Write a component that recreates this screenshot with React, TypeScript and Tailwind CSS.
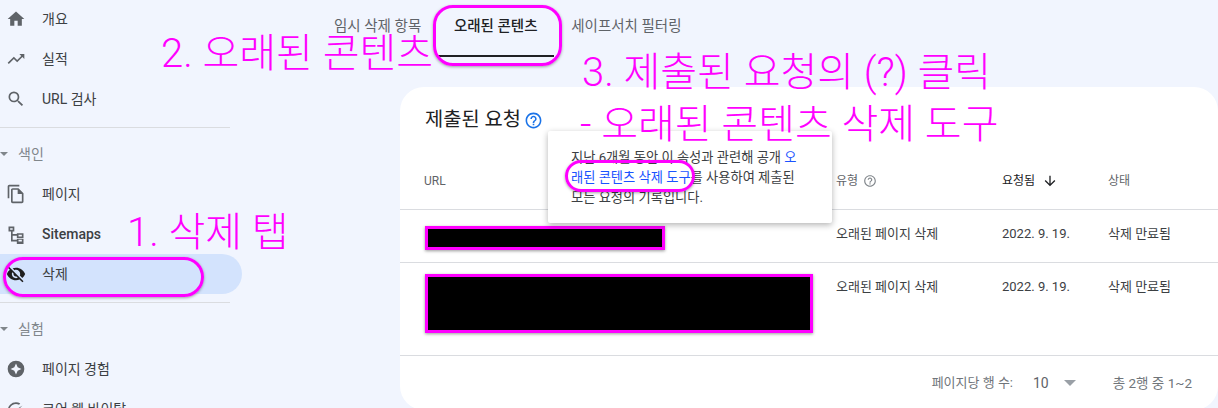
const font = "font-['Roboto','Noto_Sans_CJK_KR',sans-serif]";

function NavItem({ icon, label, active, medium }: { icon: React.ReactNode; label: string; active?: boolean; medium?: boolean }) {
  return (
    <div className={`flex h-10 w-[242px] items-center rounded-r-[20px] ${active ? "bg-[#d3e3fd]" : ""}`}>
      <div className="flex w-[31px] shrink-0 justify-center text-[#5f6368]">{icon}</div>
      <span className={`ml-[11px] text-[14px] text-[#3c4043] ${medium ? "font-medium" : "font-normal"}`}>{label}</span>
    </div>
  );
}

function Section({ label }: { label: string }) {
  return (
    <div className="flex h-10 items-center">
      <svg width="10" height="6" viewBox="0 0 10 6" className="mr-[8px] text-[#80868b]">
        <path d="M0 1h8L4 5z" fill="currentColor" />
      </svg>
      <span className="text-[14px] text-[#80868b]">{label}</span>
    </div>
  );
}

const Icon = ({ d, className }: { d: string; className?: string }) => (
  <svg width="20" height="20" viewBox="0 0 24 24" fill="currentColor" className={className}>
    <path d={d} />
  </svg>
);

function Row({ h, barH, barW, barTop }: { h: string; barH: string; barW: string; barTop: string }) {
  return (
    <div className={`flex border-b border-[#dadce0] ${h}`}>
      <div className={`w-[436px] shrink-0 pl-[25px] ${barTop}`}>
        <div className={`border-[3px] border-[#ff00ff] bg-black shadow-[0_1px_3px_rgba(0,0,0,0.4)] ${barH} ${barW}`} />
      </div>
      <div className="w-[166px] shrink-0 pt-[14px] text-[13px] text-[#3c4043]">오래된 페이지 삭제</div>
      <div className="w-[106px] shrink-0 pt-[14px] text-[13px] text-[#3c4043]">2022. 9. 19.</div>
      <div className="pt-[14px] text-[13px] text-[#3c4043]">삭제 만료됨</div>
    </div>
  );
}

const Note = ({ className, children }: { className: string; children: string }) => (
  <div className={`absolute whitespace-nowrap text-[40px] font-light leading-none text-[#ff00ff] ${className}`}>{children}</div>
);

const Ring = ({ className }: { className: string }) => (
  <div className={`absolute border-[3px] border-[#ff00ff] shadow-[0_1px_3px_rgba(0,0,0,0.35)] ${className}`} />
);

export default function App() {
  return (
    <div className={`relative flex h-[408px] w-[1218px] overflow-hidden bg-[#f1f5fe] ${font}`}>
      <aside className="w-[242px] shrink-0">
        <div className="mt-[-1px]">
          <NavItem label="개요" icon={<Icon d="M10 20v-6h4v6h5v-8h3L12 3 2 12h3v8z" />} />
          <NavItem label="실적" icon={<Icon d="M16 6l2.29 2.29-4.88 4.88-4-4L2 16.59 3.41 18l6-6 4 4 6.3-6.29L22 12V6z" />} />
          <NavItem label="URL 검사" icon={<Icon d="M15.5 14h-.79l-.28-.27A6.47 6.47 0 0016 9.5 6.5 6.5 0 109.5 16c1.61 0 3.09-.59 4.23-1.57l.27.28v.79l5 4.99L20.49 19l-4.99-5zm-6 0C7.01 14 5 11.99 5 9.5S7.01 5 9.5 5 14 7.01 14 9.5 11.99 14 9.5 14z" />} />
        </div>
        <div className="mt-[8px] w-[230px] border-t border-[#dadce0]" />
        <div className="mt-[6px]">
          <Section label="색인" />
          <NavItem label="페이지" icon={<Icon d="M16 1H4c-1.1 0-2 .9-2 2v14h2V3h12V1zm-1 4H8c-1.1 0-2 .9-2 2v14c0 1.1.9 2 2 2h11c1.1 0 2-.9 2-2V11l-6-6zM8 21V7h6v5h5v9H8z" />} />
          <NavItem medium label="Sitemaps" icon={<Icon d="M3 3h7v6H8v3h5v-1h8v6h-8v-3H8v5h5v-1h8v6h-8v-3H6V9H3V3zm2 2v2h3V5H5zm10 8v2h4v-2h-4zm0 7v1h4v-2h-4v1z" />} />
          <NavItem active label="삭제" icon={<Icon className="text-[#1f1f1f]" d="M12 7c2.76 0 5 2.24 5 5 0 .65-.13 1.26-.36 1.83l2.92 2.92c1.51-1.26 2.7-2.89 3.43-4.75-1.73-4.39-6-7.5-11-7.5-1.4 0-2.74.25-3.98.7l2.16 2.16C10.74 7.13 11.35 7 12 7zM2 4.27l2.28 2.28.46.46A11.8 11.8 0 001 12c1.73 4.39 6 7.5 11 7.5 1.55 0 3.03-.3 4.38-.84l.42.42L19.73 22 21 20.73 3.27 3 2 4.27zM7.53 9.8l1.55 1.55c-.05.21-.08.43-.08.65 0 1.66 1.34 3 3 3 .22 0 .44-.03.65-.08l1.55 1.55c-.67.33-1.41.53-2.2.53-2.76 0-5-2.24-5-5 0-.79.2-1.53.53-2.2z" />} />
        </div>
        <div className="mt-[8px] w-[230px] border-t border-[#dadce0]" />
        <div className="mt-[6px]">
          <Section label="실험" />
          <NavItem label="페이지 경험" icon={<Icon d="M12 2a10 10 0 100 20 10 10 0 000-20zm0 3.500l2 4.500 4.500 2-4.500 2-2 4.500-2-4.500-4.500-2 4.500-2z" />} />
          <NavItem label="코어 웹 바이탈" icon={<Icon d="M12 4a10 10 0 00-10 10c0 2.2.7 4.200 1.900 5.800l1.600-1.200A8 8 0 0112 6c1.300 0 2.500.3 3.600.9l1.500-1.500A10 10 0 0012 4zm7.800 3.800l-6.300 6.300a2 2 0 11-1.400-1.400z" />} />
        </div>
      </aside>

      <main className="min-w-0 flex-1">
        <nav className="flex h-[87px] items-start pl-[92px] pt-[16px] text-[14.5px]">
          <span className="pr-[16px] text-[#5f6368]">임시 삭제 항목</span>
          <div className="flex w-[117px] flex-col items-center">
            <span className="font-medium text-[#202124]">오래된 콘텐츠</span>
            <div className="mt-[17px] h-[2px] w-full bg-[#202124]" />
          </div>
          <span className="pl-[17px] text-[#5f6368]">세이프서치 필터링</span>
        </nav>
        <section className="ml-[158px] h-[323px] rounded-[24px] bg-white">
          <div className="flex h-[66px] items-center gap-[3px] pl-[25px]">
            <h2 className="text-[19.8px] text-[#202124]">제출된 요청</h2>
            <svg width="19" height="19" viewBox="0 0 24 24" fill="#1a73e8">
              <path d="M11 18h2v-2h-2v2zm1-16C6.480 2 2 6.480 2 12s4.480 10 10 10 10-4.480 10-10S17.520 2 12 2zm0 18c-4.410 0-8-3.590-8-8s3.590-8 8-8 8 3.590 8 8-3.590 8-8 8zm0-14c-2.210 0-4 1.790-4 4h2c0-1.100.9-2 2-2s2 .9 2 2c0 2-3 1.750-3 5h2c0-2.250 3-2.500 3-5 0-2.210-1.790-4-4-4z" />
            </svg>
          </div>
          <div className="flex h-[57px] items-center border-b border-[#dadce0] text-[12px] text-[#5f6368]">
            <div className="w-[436px] shrink-0 pl-[24px]">URL</div>
            <div className="flex w-[166px] shrink-0 items-center gap-[5px]">
              유형
              <svg width="14" height="14" viewBox="0 0 24 24" fill="#80868b">
                <path d="M11 18h2v-2h-2v2zm1-16C6.480 2 2 6.480 2 12s4.480 10 10 10 10-4.480 10-10S17.520 2 12 2zm0 18c-4.410 0-8-3.590-8-8s3.590-8 8-8 8 3.590 8 8-3.590 8-8 8zm0-14c-2.210 0-4 1.790-4 4h2c0-1.100.9-2 2-2s2 .9 2 2c0 2-3 1.750-3 5h2c0-2.250 3-2.500 3-5 0-2.210-1.790-4-4-4z" />
              </svg>
            </div>
            <div className="flex w-[106px] shrink-0 items-center gap-[7px] text-[#202124]">
              요청됨
              <svg width="16" height="16" viewBox="0 0 24 24" fill="#202124">
                <path d="M20 12l-1.410-1.410L13 16.170V4h-2v12.170l-5.580-5.590L4 12l8 8 8-8z" />
              </svg>
            </div>
            <div>상태</div>
          </div>
          <Row h="h-[53px]" barH="h-[24px]" barW="w-[240px]" barTop="pt-[16px]" />
          <Row h="h-[93px]" barH="h-[59px]" barW="w-[388px]" barTop="pt-[11px]" />
          <div className="flex h-[54px] items-center justify-end pr-[26px] text-[13px] text-[#70757a]">
            <span>페이지당 행 수:</span>
            <span className="ml-[20px] text-[14px] text-[#5f6368]">10</span>
            <svg width="12" height="6" viewBox="0 0 12 6" className="ml-[15px]">
              <path d="M0 0h12L6 6z" fill="#9aa0a6" />
            </svg>
            <span className="ml-[37px] text-[13.5px]">총 2행 중 1~2</span>
          </div>
        </section>
      </main>

      {/* 도움말 팝업 */}
      <div className="absolute left-[548px] top-[131px] h-[92px] w-[284px] rounded-[2px] bg-white pl-[23px] pr-[27px] pt-[17px] text-[13.25px] leading-[20px] text-[#3c4043] shadow-[0_2px_6px_rgba(0,0,0,0.3)]">
        지난 6개월 동안 이 속성과 관련해 공개 <span className="text-[#1a53ff]">오래된 콘텐츠 삭제 도구</span>를 사용하여 제출된 모든 요청의 기록입니다.
      </div>

      {/* 주석 */}
      <Note className="left-[161px] top-[34px]">2. 오래된 콘텐츠</Note>
      <Note className="left-[582px] top-[53px]">3. 제출된 요청의 (?) 클릭</Note>
      <Note className="left-[580px] top-[105px]">- 오래된 콘텐츠 삭제 도구</Note>
      <Note className="left-[127px] top-[213px]">1. 삭제 탭</Note>
      <Ring className="left-[433px] top-[5px] h-[61px] w-[129px] rounded-[20px]" />
      <Ring className="left-[3px] top-[257px] h-[40px] w-[201px] rounded-[20px]" />
      <Ring className="left-[565px] top-[160px] h-[32px] w-[130px] rounded-[16px]" />
    </div>
  );
}
